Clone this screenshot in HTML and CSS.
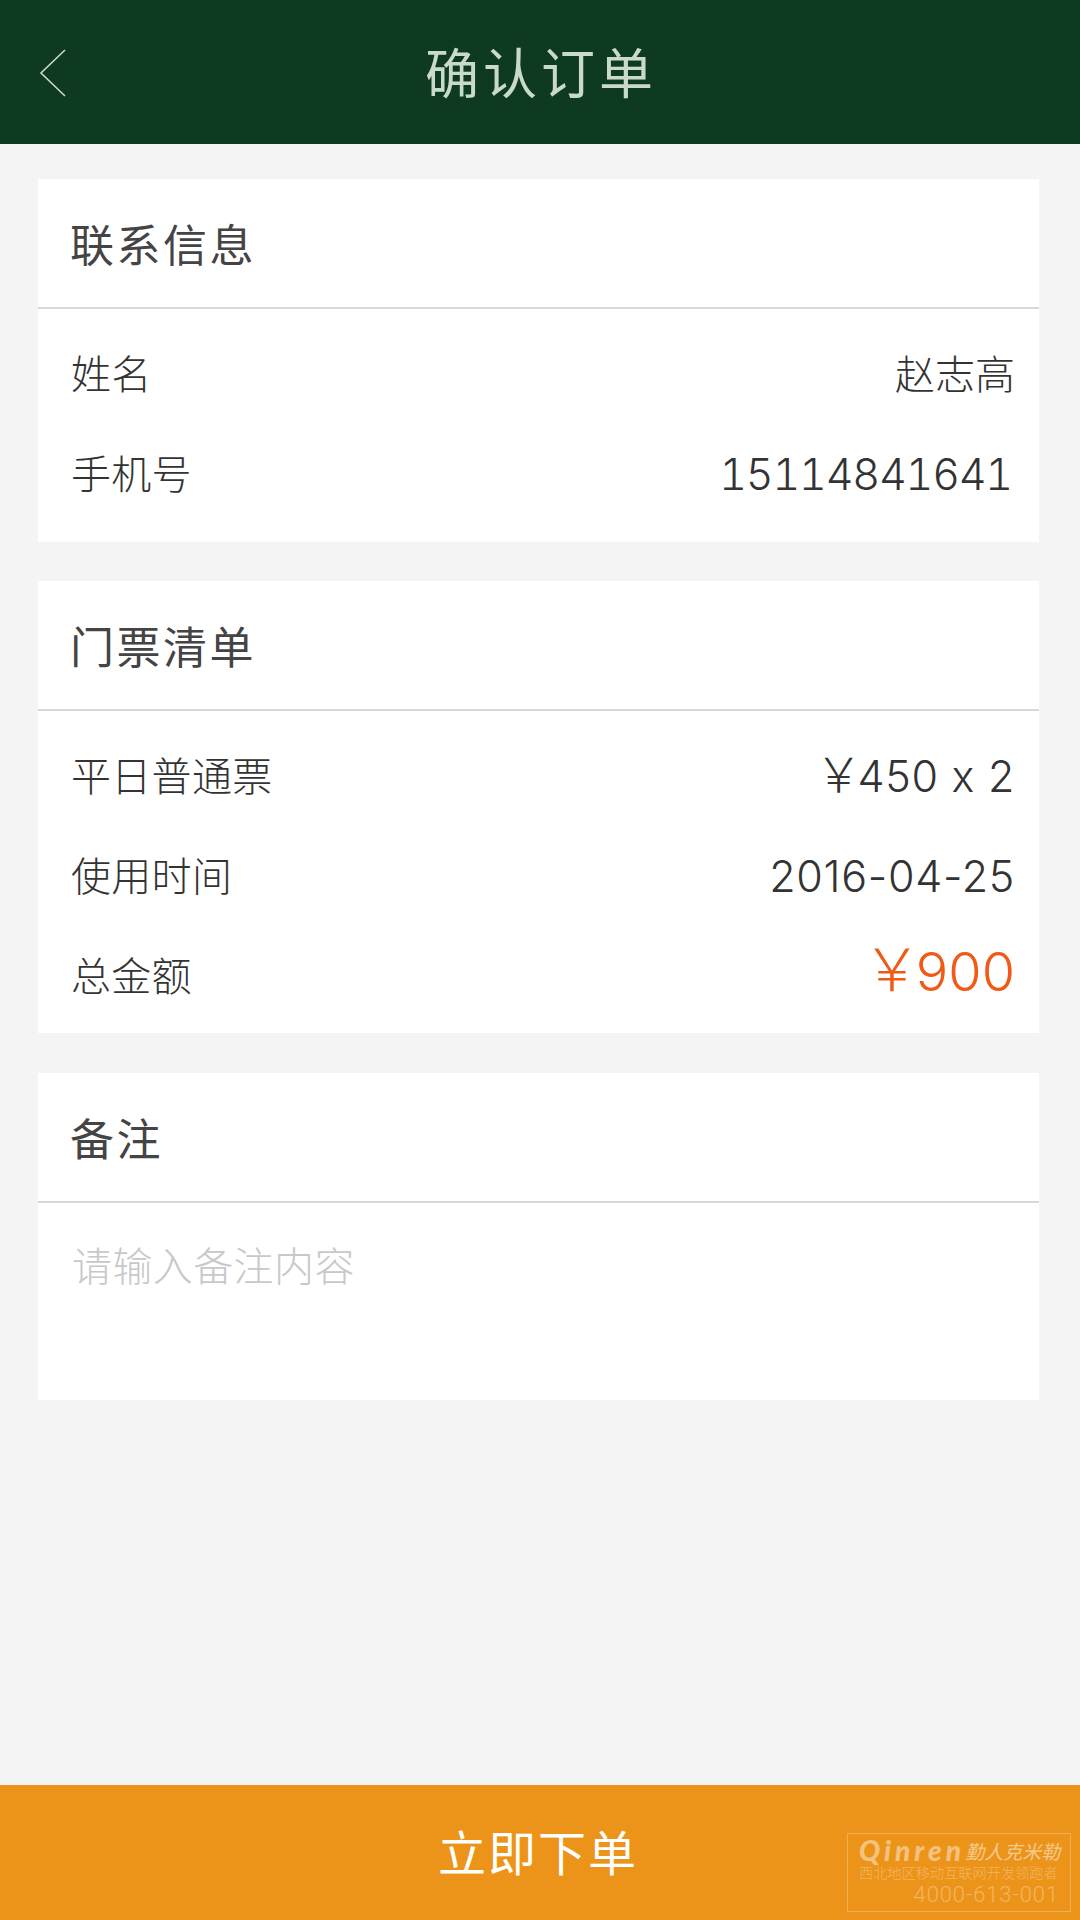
FILE: index.html
```html
<!DOCTYPE html>
<html lang="zh-CN">
<head>
<meta charset="utf-8">
<title>确认订单</title>
<link rel="stylesheet" href="styles.css">
</head>
<body>
<div class="page">
  <header class="topbar">
    <svg class="back" width="30" height="48" viewBox="0 0 30 48"><path d="M26 1 L2 24 L26 47" fill="none" stroke="#c9dacb" stroke-width="1.6"/></svg>
    <h1 class="topbar-title">确认订单</h1>
  </header>
  <main class="content">
    <section class="card card-contact">
      <h2 class="card-title">联系信息</h2>
      <div class="rows rows-contact">
        <div class="row"><span class="label">姓名</span><span class="value">赵志高</span></div>
        <div class="row"><span class="label">手机号</span><span class="value num phone">15114841641</span></div>
      </div>
    </section>
    <section class="card card-tickets">
      <h2 class="card-title">门票清单</h2>
      <div class="rows rows-tickets">
        <div class="row"><span class="label">平日普通票</span><span class="value num"><span class="yen">￥</span>450 x 2</span></div>
        <div class="row"><span class="label">使用时间</span><span class="value num">2016-04-25</span></div>
        <div class="row"><span class="label">总金额</span><span class="value num total"><span class="yen">￥</span>900</span></div>
      </div>
    </section>
    <section class="card card-note">
      <h2 class="card-title">备注</h2>
      <div class="note-placeholder">请输入备注内容</div>
    </section>
  </main>
  <footer class="submit">
    <span class="submit-text">立即下单</span>
    <div class="watermark">
      <div class="wm-brand"><span class="wm-en">Qinren</span><span class="wm-cn">勤人克米勒</span></div>
      <div class="wm-slogan">西北地区移动互联网开发领跑者</div>
      <div class="wm-phone">4000-613-001</div>
    </div>
  </footer>
</div>
</body>
</html>
```
FILE: styles.css
```css
* { box-sizing: border-box; margin: 0; padding: 0; }
html, body { width: 1080px; height: 1920px; overflow: hidden; }
body { font-family: "Noto Sans CJK SC", "Noto Sans", sans-serif; font-weight: 300; background: #f4f4f4; color: #333; }
.page { width: 1080px; height: 1920px; display: flex; flex-direction: column; }
.topbar { height: 144px; background: #0e3a1f; position: relative; display: flex; align-items: center; justify-content: center; flex: none; }
.back { position: absolute; left: 39px; top: 49px; }
.topbar-title { font-size: 54px; font-weight: 400; color: #c9dacb; letter-spacing: 4px; margin: -2px 0 0 2px; line-height: 1; }
.content { flex: 1; padding: 35px 41px 0 38px; display: flex; flex-direction: column; gap: 39px; }
.card { background: #fff; }
.card-contact { height: 363px; }
.card-tickets { height: 452px; }
.card-note { height: 327px; margin-top: 1px; }
.card-title { height: 130px; border-bottom: 2px solid #d8d8d8; padding: 0 0 0 32px; font-size: 44px; font-weight: 400; color: #444; letter-spacing: 2.5px; line-height: 128px; }
.rows { padding: 13px 24px 0 33px; }
.row { height: 100px; display: flex; justify-content: space-between; align-items: center; font-size: 40px; }
.label { line-height: 1; letter-spacing: 0.3px; }
.value { line-height: 1; }
.num { font-family: "Inter", "Noto Sans CJK SC", sans-serif; font-weight: 300; font-size: 43px; margin-top: 4px; letter-spacing: 0.7px; font-feature-settings: "calt" 0; }
.yen { font-size: 1.1em; letter-spacing: -0.1em; line-height: 0; }
.phone { margin-right: 3px; letter-spacing: -1.2px; font-feature-settings: "calt" 0, "tnum" 1; }
.total { font-size: 54px; color: #f05a16; margin-top: -4px; letter-spacing: 0; }
.note-placeholder { padding: 31px 0 0 34px; font-size: 40px; color: #c8c8c8; line-height: 60px; letter-spacing: 0.4px; }
.submit { height: 135px; background: #ec941a; position: relative; display: flex; align-items: center; justify-content: center; flex: none; }
.submit-text { font-size: 48px; color: #fff; letter-spacing: 2px; margin: 0 4px 6px 0; line-height: 1; font-weight: 400; }
.watermark { position: absolute; left: 847px; top: 48px; width: 224px; height: 79px; border: 1px solid rgba(255,255,255,0.25); color: rgba(255,255,255,0.32); padding: 2px 14px 0 11px; display: flex; flex-direction: column; line-height: 1; }
.wm-brand { display: flex; justify-content: space-between; align-items: center; height: 28px; }
.wm-en { font-family: "Lato", sans-serif; font-style: italic; font-weight: 900; font-size: 28px; letter-spacing: 4px; color: rgba(255,255,255,0.45); }
.wm-cn { font-size: 19px; font-weight: 400; font-style: italic; color: rgba(255,255,255,0.5); white-space: nowrap; }
.wm-slogan { font-size: 14.2px; white-space: nowrap; margin-top: 1px; }
.wm-phone { font-family: "Roboto", sans-serif; font-weight: 300; font-size: 22px; margin: 5px -3px 0 0; letter-spacing: 0.9px; text-align: right; }
```
